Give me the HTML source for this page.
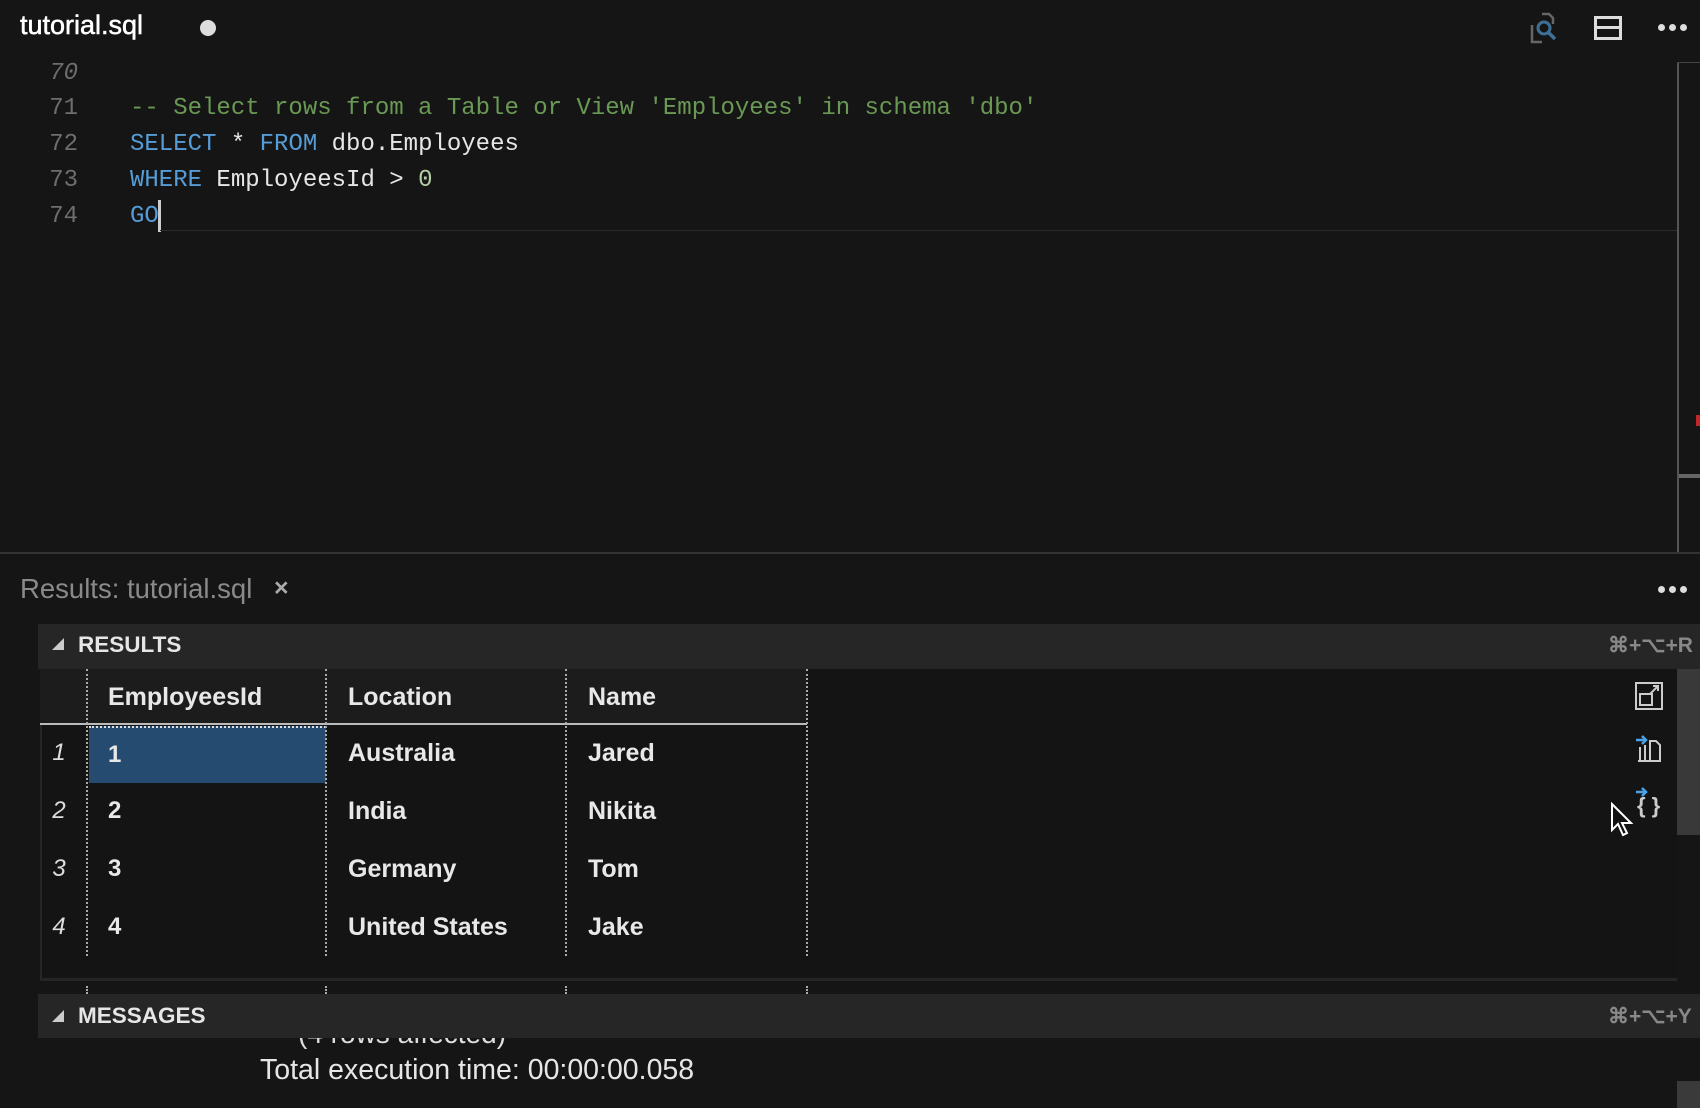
<!DOCTYPE html>
<html><head><meta charset="utf-8"><style>
*{margin:0;padding:0;box-sizing:border-box}
body{width:1700px;height:1108px;background:#151515;position:relative;overflow:hidden;font-family:"Liberation Sans",sans-serif;color:#e6e6e6}
.a{position:absolute;white-space:pre}
.mono{font-family:"Liberation Mono",monospace;font-size:24px}
.ln{color:#6e6e6e;width:50px;text-align:right;left:28px}
.kw{color:#569cd6}.cm{color:#6a9955}.nm{color:#b5cea8}
.cell{font-size:24px;font-weight:bold;color:#e8e8e8}
.rn{font-size:24px;font-style:italic;color:#ddd;width:30px;text-align:center;left:44px}
.vd{position:absolute;width:0;border-left:2px dotted #aaa}
.dots{position:absolute;width:30px;height:7px}
.dots i{position:absolute;top:0;width:7px;height:7px;border-radius:50%;background:#ddd}
</style></head><body>
<div class="a" style="left:20px;top:10px;font-size:27px;color:#fff;-webkit-text-stroke:0.5px #fff">tutorial.sql</div>
<div class="a" style="left:200px;top:20px;width:16px;height:16px;border-radius:50%;background:#ddd"></div>
<svg class="a" style="left:1528px;top:12px" width="34" height="34" viewBox="0 0 34 34"><path d="M14 2h7l4 4v6M4 13v17h10" fill="none" stroke="#666" stroke-width="2.5"/><circle cx="16" cy="16" r="6" fill="none" stroke="#3f6f94" stroke-width="3"/><path d="M20 20l7 7" stroke="#3f6f94" stroke-width="3.5"/></svg>
<div class="a" style="left:1594px;top:16px;width:28px;height:24px;border:3px solid #ddd"></div>
<div class="a" style="left:1594px;top:26px;width:28px;height:3px;background:#ddd"></div>
<div class="dots" style="left:1658px;top:24px"><i style="left:0"></i><i style="left:11px"></i><i style="left:22px"></i></div>
<div class="a mono ln" style="top:60px;font-style:italic">70</div>
<div class="a mono ln" style="top:95px">71</div>
<div class="a mono ln" style="top:131px">72</div>
<div class="a mono ln" style="top:167px">73</div>
<div class="a mono ln" style="top:203px">74</div>
<div class="a mono cm" style="left:130px;top:95px">-- Select rows from a Table or View 'Employees' in schema 'dbo'</div>
<div class="a mono" style="left:130px;top:131px"><span class="kw">SELECT</span> * <span class="kw">FROM</span> dbo.Employees</div>
<div class="a mono" style="left:130px;top:167px"><span class="kw">WHERE</span> EmployeesId &gt; <span class="nm">0</span></div>
<div class="a mono kw" style="left:130px;top:203px">GO</div>
<div class="a" style="left:158px;top:200px;width:3px;height:32px;background:#ccc"></div>
<div class="a" style="left:160px;top:230px;width:1518px;height:1px;background:#2a2a2a"></div>
<div class="a" style="left:1677px;top:62px;width:2px;height:491px;background:#555"></div>
<div class="a" style="left:1677px;top:62px;width:23px;height:1px;background:#444"></div>
<div class="a" style="left:1696px;top:415px;width:4px;height:11px;background:#c0262b"></div>
<div class="a" style="left:1679px;top:474px;width:21px;height:4px;background:#666"></div>
<div class="a" style="left:0;top:552px;width:1700px;height:2px;background:#333"></div>
<div class="a" style="left:20px;top:573px;font-size:27.5px;color:#8a8a8a">Results: tutorial.sql</div>
<div class="a" style="left:274px;top:574px;font-size:25px;color:#aaa;font-weight:bold">×</div>
<div class="dots" style="left:1658px;top:586px"><i style="left:0"></i><i style="left:11px"></i><i style="left:22px"></i></div>
<div class="a" style="left:38px;top:624px;width:1662px;height:45px;background:#262626"></div>
<div class="a" style="left:52px;top:638px;width:0;height:0;border-left:12px solid transparent;border-bottom:12px solid #ccc"></div>
<div class="a" style="left:78px;top:632px;font-size:22.5px;font-weight:bold;color:#e6e6e6">RESULTS</div>
<div class="a" style="left:1608px;top:633px;font-size:21px;font-weight:bold;color:#888">⌘+⌥+R</div>
<div class="a" style="left:40px;top:669px;width:1637px;height:312px;background:#141414;border-left:2px solid #262626;border-bottom:3px solid #252525"></div>
<div class="a" style="left:40px;top:669px;width:767px;height:55px;background:#1c1c1c"></div>
<div class="a" style="left:40px;top:723px;width:767px;height:2px;background:#bbb"></div>
<div class="a" style="left:89px;top:726px;width:237px;height:57px;background:#264b70;border-top:2px dotted #ddd"></div>
<div class="vd" style="left:86px;top:669px;height:287px"></div>
<div class="vd" style="left:325px;top:669px;height:287px"></div>
<div class="vd" style="left:565px;top:669px;height:287px"></div>
<div class="vd" style="left:806px;top:669px;height:287px"></div>
<div class="a cell" style="left:108px;top:683px;font-size:25px">EmployeesId</div>
<div class="a cell" style="left:348px;top:683px;font-size:25px">Location</div>
<div class="a cell" style="left:588px;top:683px;font-size:25px">Name</div>
<div class="a rn" style="top:739px">1</div><div class="a cell" style="left:108px;top:741px">1</div><div class="a cell" style="left:348px;top:739px;font-size:25px">Australia</div><div class="a cell" style="left:588px;top:739px;font-size:25px">Jared</div>
<div class="a rn" style="top:797px">2</div><div class="a cell" style="left:108px;top:797px">2</div><div class="a cell" style="left:348px;top:797px;font-size:25px">India</div><div class="a cell" style="left:588px;top:797px;font-size:25px">Nikita</div>
<div class="a rn" style="top:855px">3</div><div class="a cell" style="left:108px;top:855px">3</div><div class="a cell" style="left:348px;top:855px;font-size:25px">Germany</div><div class="a cell" style="left:588px;top:855px;font-size:25px">Tom</div>
<div class="a rn" style="top:913px">4</div><div class="a cell" style="left:108px;top:913px">4</div><div class="a cell" style="left:348px;top:913px;font-size:25px">United States</div><div class="a cell" style="left:588px;top:913px;font-size:25px">Jake</div>
<div class="a" style="left:1677px;top:669px;width:23px;height:166px;background:#393939"></div>
<svg class="a" style="left:1634px;top:681px" width="30" height="30"><rect x="2" y="2" width="26" height="26" fill="none" stroke="#ccc" stroke-width="2"/><rect x="6" y="13" width="12" height="11" fill="none" stroke="#ccc" stroke-width="2"/><path d="M16 13l8-8M19 5h5v5" fill="none" stroke="#ccc" stroke-width="2"/></svg>
<svg class="a" style="left:1634px;top:733px" width="30" height="30"><path d="M2 7h10M8 3l4 4-4 4" fill="none" stroke="#4aa3e8" stroke-width="2.5"/><path d="M6 28V14M11 28V12M16 28V8h6l4 4v16H4" fill="none" stroke="#ccc" stroke-width="2"/></svg>
<svg class="a" style="left:1634px;top:785px" width="34" height="34"><path d="M2 7h10M8 3l4 4-4 4" fill="none" stroke="#4aa3e8" stroke-width="2.5"/><text x="3" y="28" font-size="22" font-weight="bold" fill="#ccc" font-family="Liberation Sans">{ }</text></svg>
<svg class="a" style="left:1610px;top:802px" width="26" height="36"><path d="M2 2v26l6-6 5 11 4-2-5-10h9z" fill="#111" stroke="#fff" stroke-width="2"/></svg>
<div class="vd" style="left:86px;top:986px;height:8px"></div>
<div class="vd" style="left:325px;top:986px;height:8px"></div>
<div class="vd" style="left:565px;top:986px;height:8px"></div>
<div class="vd" style="left:806px;top:986px;height:8px"></div>
<div class="a" style="left:38px;top:994px;width:1662px;height:44px;background:#262626"></div>
<div class="a" style="left:52px;top:1010px;width:0;height:0;border-left:12px solid transparent;border-bottom:12px solid #ccc"></div>
<div class="a" style="left:78px;top:1003px;font-size:22.5px;font-weight:bold;color:#e6e6e6">MESSAGES</div>
<div class="a" style="left:1608px;top:1004px;font-size:21px;font-weight:bold;color:#888">⌘+⌥+Y</div>
<div class="a" style="left:0;top:1038px;width:1677px;height:70px;overflow:hidden"><div class="a" style="left:298px;top:-20px;font-size:28px;color:#ddd">(4 rows affected)</div></div>
<div class="a" style="left:260px;top:1054px;font-size:28.5px;color:#e6e6e6">Total execution time: 00:00:00.058</div>
<div class="a" style="left:1677px;top:1081px;width:23px;height:27px;background:#3a3a3a"></div>
</body></html>
